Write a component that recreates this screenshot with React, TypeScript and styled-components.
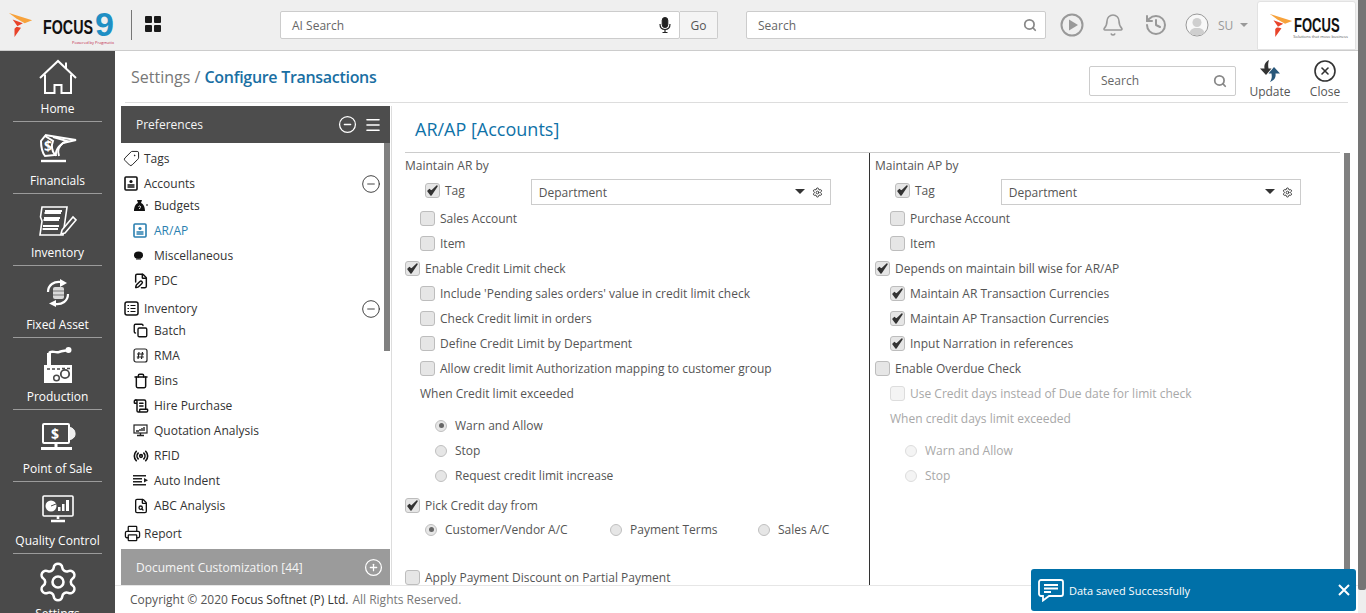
import React from 'react';
import styled, { createGlobalStyle } from 'styled-components';
import {
  Bell,
  CircleMinus,
  CirclePlus,
  CircleX,
  Copy,
  FilePen,
  FileSearch,
  History,
  Menu,
  Printer,
  Radio as RadioWaves,
  ScrollText,
  Search,
  Settings,
  Tag,
  Trash,
} from 'lucide-react';

const GlobalStyle = createGlobalStyle`
  html, body { margin: 0; padding: 0; height: 100%; overflow: hidden; }
  body { font-family: "Open Sans", "Liberation Sans", sans-serif; font-size: 12px; color: #444; background: #fff; }
  #root { height: 100%; }
  * { box-sizing: border-box; }
`;

const Shell = styled.div`
  display: flex;
  height: 100vh;
  overflow: hidden;
  position: relative;
`;

const Page = styled.div`
  flex: 1;
  min-width: 0;
  display: flex;
  flex-direction: column;
`;

const Rail = styled.div`
  width: 8px;
  background: #eee;
  display: flex;
  flex-direction: column;
`;

const RailThumb = styled.div`
  height: 590px;
  background: #757575;
  border-radius: 0 0 2px 2px;
`;

// top bar
const TopBar = styled.header`
  height: 51px;
  flex: none;
  display: flex;
  align-items: center;
  padding-left: 8px;
  background: #efefef;
  border-bottom: 1px solid #ccc;
`;

const LogoWrap = styled.div`
  width: 106px;
  height: 34px;
  display: flex;
  align-items: center;
  position: relative;
`;

const LogoText = styled.span`
  font-family: "Liberation Sans", sans-serif;
  font-weight: 700;
  font-size: 21px;
  line-height: 22px;
  color: #111;
  margin-left: 9px;
  transform: scaleX(0.68);
  transform-origin: left center;
  width: 50px;
  flex: none;
  margin-top: 3px;
`;

const LogoNine = styled.span`
  font-family: "Liberation Sans", sans-serif;
  font-weight: 700;
  font-size: 34px;
  color: #1f8fc4;
  margin-left: 2px;
  line-height: 26px;
  height: 26px;
  margin-top: -2px;
`;

const LogoTiny = styled.span`
  position: absolute;
  right: 0;
  bottom: -3px;
  font-size: 4px;
  line-height: 5px;
  color: #c2284a;
`;

const BarDivider = styled.div`
  width: 1px;
  height: 30px;
  background: #777;
  margin-left: 17px;
`;

const GridIcon = styled.div`
  width: 16px;
  height: 16px;
  margin: -2px 0 0 13px;
  display: grid;
  grid-template-columns: 7px 7px;
  grid-template-rows: 7px 7px;
  gap: 2px;
`;

const GridCell = styled.span`
  background: #1a1a1a;
  border-radius: 1px;
`;

const SearchBox = styled.div<{ $w: number; $ml: number }>`
  width: ${(p) => p.$w}px;
  height: 28px;
  margin-left: ${(p) => p.$ml}px;
  flex: none;
  display: flex;
  align-items: center;
  justify-content: space-between;
  padding: 0 8px 0 11px;
  background: #fff;
  border: 1px solid #ccc;
  border-radius: 2px;
  color: #666;
  font-size: 12px;
`;

const GoButton = styled.button`
  width: 38px;
  height: 28px;
  flex: none;
  background: #f4f4f4;
  border: 1px solid #ccc;
  border-left: 0;
  border-radius: 0 2px 2px 0;
  font: inherit;
  font-size: 12px;
  color: #555;
  padding: 0;
`;

const BarIcon = styled.div<{ $ml: number }>`
  width: 24px;
  height: 24px;
  margin-left: ${(p) => p.$ml}px;
  flex: none;
  display: flex;
  align-items: center;
  justify-content: center;
  color: #999;
`;

const UserName = styled.span`
  color: #999;
  font-size: 12px;
  margin-left: 9px;
`;

const Caret = styled.span`
  width: 0;
  height: 0;
  margin-left: 7px;
  border-left: 4px solid transparent;
  border-right: 4px solid transparent;
  border-top: 4px solid #999;
`;

const BrandBox = styled.div`
  width: 99px;
  height: 49px;
  margin-left: 9px;
  align-self: flex-start;
  margin-top: 1px;
  background: #fff;
  border: 1px solid #e2e2e2;
  border-radius: 3px 3px 0 0;
  display: flex;
  align-items: center;
  padding-left: 11px;
  gap: 0;
  flex: none;
`;

const BrandStack = styled.div`
  display: flex;
  flex-direction: column;
  width: 48px;
  margin-top: 2px;
`;

const BrandText = styled.span`
  font-family: "Liberation Sans", sans-serif;
  font-weight: 700;
  font-size: 21px;
  line-height: 19px;
  color: #111;
  transform: scaleX(0.62);
  transform-origin: left center;
`;

const BrandTag = styled.span`
  font-size: 4px;
  line-height: 5px;
  white-space: nowrap;
  color: #555;
  margin-left: -1px;
`;

// page body
const Body = styled.div`
  flex: 1;
  min-height: 0;
  display: flex;
`;

const SideNav = styled.nav`
  width: 115px;
  flex: none;
  background: #4a4a4a;
  overflow: hidden;
`;

const SideItem = styled.div`
  position: relative;
  height: 72px;
  flex: none;
  display: flex;
  flex-direction: column;
  align-items: center;
  justify-content: flex-end;
  padding-bottom: 3px;
  color: #fff;
  font-size: 12px;
  line-height: 18px;
  margin: 0 13px;
  border-bottom: 1px solid #9b9b9b;
  white-space: nowrap;

  &:first-child { height: 71px; }
  &:last-child {
    border-bottom: 0;
    height: 68px;
    padding: 9px 0 0;
    justify-content: flex-start;
  }
`;

const SideIcon = styled.div`
  height: 38px;
  flex: none;
  display: flex;
  align-items: center;
  justify-content: center;
  margin-bottom: 4px;
`;

const Main = styled.main`
  flex: 1;
  min-width: 0;
  display: flex;
  flex-direction: column;
`;

const MainHead = styled.div`
  height: 52px;
  flex: none;
  margin: 0 10px;
  padding: 0 3px 0 6px;
  display: flex;
  align-items: center;
  border-bottom: 1px solid #ddd;
`;

const Crumb = styled.div`
  font-size: 16px;
  color: #777;
  margin-right: auto;
  margin-top: 1px;
`;

const CrumbStrong = styled.span`
  color: #1a6fa3;
  font-weight: 600;
  letter-spacing: -0.3px;
`;

const HeadSearch = styled(SearchBox)`
  height: 30px;
  margin-top: 8px;
`;

const HeadAction = styled.div<{ $w: number; $ml: number }>`
  width: ${(p) => p.$w}px;
  margin-left: ${(p) => p.$ml}px;
  display: flex;
  flex-direction: column;
  align-items: center;
  gap: 1px;
  color: #555;
  font-size: 12px;
  line-height: 16px;
  padding-top: 6px;
`;

const HeadActionIcon = styled.div`
  height: 24px;
  display: flex;
  align-items: center;
  justify-content: center;
  color: #333;
`;

const Split = styled.div`
  flex: 1;
  min-height: 0;
  display: flex;
  padding-left: 6px;
`;

// preferences panel
const Panel = styled.aside`
  width: 271px;
  flex: none;
  margin-top: 3px;
  display: flex;
  flex-direction: column;
  border-right: 1px solid #ddd;
`;

const PanelHead = styled.div<{ $muted?: boolean }>`
  height: ${(p) => (p.$muted ? 36 : 37)}px;
  flex: none;
  margin-right: 1px;
  display: flex;
  align-items: center;
  padding: 0 ${(p) => (p.$muted ? 7 : 8)}px 0 15px;
  background: ${(p) => (p.$muted ? '#9b9b9b' : '#4d4d4d')};
  color: #fff;
  font-size: 12px;
  gap: 7px;
`;

const PanelTitle = styled.span`
  margin-right: auto;
  color: #f5f5f5;
`;

const TreeWrap = styled.div`
  flex: 1;
  min-height: 0;
  display: flex;
  margin-right: 1px;
`;

const Tree = styled.div`
  flex: 1;
  overflow: hidden;
`;

const TreeThumbTrack = styled.div`
  width: 6px;
  flex: none;
`;

const TreeThumb = styled.div`
  height: 208px;
  background: #808080;
`;

const ParentRow = styled.div`
  height: 19px;
  margin-top: 6px;
  padding: 0 3px 0 3px;
  display: flex;
  align-items: center;
  color: #333;
  white-space: nowrap;
`;

const ChildRow = styled.div<{ $active?: boolean }>`
  height: 25px;
  padding-left: 12px;
  display: flex;
  align-items: center;
  color: ${(p) => (p.$active ? '#2a7fb0' : '#333')};
  white-space: nowrap;
`;

const TreeIcon = styled.span<{ $w: number }>`
  width: ${(p) => p.$w}px;
  flex: none;
  display: flex;
  align-items: center;
`;

const TreeToggle = styled.span`
  margin-left: auto;
  display: flex;
  color: #333;
`;

const TagGlyph = styled(Tag)`
  transform: rotate(90deg);
  margin-left: -1px;
`;

// form
const Content = styled.section`
  flex: 1;
  min-width: 0;
  display: flex;
  flex-direction: column;
`;

const ContentTitle = styled.h2`
  height: 49px;
  flex: none;
  margin: 0;
  padding: 14px 0 0 23px;
  font-size: 18px;
  line-height: 24px;
  font-weight: 400;
  color: #0f72a8;
`;

const FormArea = styled.div`
  flex: 1;
  min-height: 0;
  display: flex;
`;

const FormGrid = styled.div`
  width: 935px;
  margin-left: 13px;
  display: grid;
  grid-template-columns: 464px 1fr;
  border-top: 1px solid #ccc;
  overflow: hidden;
`;

const FormColumn = styled.div<{ $right?: boolean }>`
  min-height: 0;
  overflow: hidden;
  ${(p) => (p.$right ? 'border-left: 1px solid #333; padding-left: 5px;' : '')}
`;

const FormThumb = styled.div`
  width: 6px;
  margin-left: 4px;
  margin-top: 1px;
  background: #808080;
  flex: none;
`;

const Row = styled.div<{ $indent?: number; $mt?: number; $off?: boolean; $h?: number }>`
  height: ${(p) => p.$h ?? 25}px;
  margin-top: ${(p) => p.$mt ?? 0}px;
  padding-left: ${(p) => p.$indent ?? 0}px;
  display: flex;
  align-items: center;
  white-space: nowrap;
  color: ${(p) => (p.$off ? '#a8a8a8' : '#555')};
`;

const TagRow = styled(Row)`
  align-items: flex-start;
  height: 28px;
  padding-top: 0;
`;

const CheckField = styled.span`
  height: 25px;
  display: inline-flex;
  align-items: center;
  gap: 5px;
`;

const Box = styled.span<{ $off?: boolean }>`
  width: 15px;
  height: 15px;
  flex: none;
  border: 1px solid ${(p) => (p.$off ? '#ddd' : '#bdbdbd')};
  border-radius: 3px;
  background: ${(p) => (p.$off ? '#f4f4f4' : '#e6e6e6')};
  display: flex;
  align-items: center;
  justify-content: center;
`;

const Dot = styled.span<{ $on?: boolean; $off?: boolean }>`
  width: 12px;
  height: 12px;
  flex: none;
  border-radius: 50%;
  border: 1px solid ${(p) => (p.$off ? '#ddd' : '#c0c0c0')};
  background: ${(p) => (p.$off ? '#f4f4f4' : '#e6e6e6')};
  margin-right: 8px;
  display: flex;
  align-items: center;
  justify-content: center;

  &::after {
    content: '';
    width: 5px;
    height: 5px;
    border-radius: 50%;
    background: ${(p) => (p.$on ? '#666' : 'transparent')};
  }
`;

const RadioOption = styled.span<{ $w: number }>`
  width: ${(p) => p.$w}px;
  display: inline-flex;
  align-items: center;
`;

const SelectBox = styled.div<{ $ml: number }>`
  width: 300px;
  height: 26px;
  margin: 1px 0 0 ${(p) => p.$ml}px;
  padding: 1px 7px 0 7px;
  display: flex;
  align-items: center;
  border: 1px solid #ccc;
  color: #555;
`;

const SelectCaret = styled.span`
  width: 0;
  height: 0;
  margin: -2px 7px 0 auto;
  border-left: 5px solid transparent;
  border-right: 5px solid transparent;
  border-top: 5px solid #333;
`;

const Footer = styled.footer`
  height: 28px;
  flex: none;
  padding-left: 15px;
  display: flex;
  align-items: center;
  gap: 4px;
  border-top: 1px solid #e6e6e6;
  color: #777;
  font-size: 12px;
`;

const FooterCopy = styled.span`
  color: #555;
`;

const FooterStrong = styled.span`
  color: #333;
  font-weight: 500;
`;

const Toast = styled.div`
  position: absolute;
  right: 10px;
  bottom: 2px;
  width: 325px;
  height: 42px;
  padding: 0 6px 0 7px;
  display: flex;
  align-items: center;
  gap: 5px;
  background: #0070a8;
  border-radius: 3px;
  color: #fff;
  font-size: 11px;
`;

const ToastClose = styled.span`
  margin-left: auto;
  display: flex;
`;

// drawings
const Flame = ({ size }: { size: number }) => (
  <svg width={size} height={size} viewBox="0 0 26 28">
    <polygon points="0,1 25,9 17,12 8,7" fill="#f7a23b" />
    <polygon points="4,8 15,12 8,16 13,17 6,27 6,18 9,15" fill="#e8432a" />
  </svg>
);

const CheckMark = () => (
  <svg width="13" height="13" viewBox="0 0 13 13">
    <path d="M2 7 L5 11 L11 2 L5.2 7.6 L3.6 5.6 Z" fill="#333" stroke="#333" strokeWidth="1.5" strokeLinejoin="round" />
  </svg>
);

const Check = ({ on, off }: { on?: boolean; off?: boolean }) => <Box $off={off}>{on && <CheckMark />}</Box>;

const MicIcon = () => (
  <svg width="12" height="16" viewBox="0 0 12 16" fill="none" stroke="#222">
    <rect x="3.2" y="0.5" width="5.6" height="10" rx="2.8" fill="#222" />
    <path d="M1 7 C1 11 3 12.5 6 12.5 C9 12.5 11 11 11 7 M6 12.5 V15.5 M3.5 15.5 H8.5" strokeWidth="1.2" />
  </svg>
);

const PlayIcon = () => (
  <svg width="24" height="24" viewBox="0 0 24 24">
    <circle cx="12" cy="12" r="10.5" fill="none" stroke="#999" strokeWidth="2" />
    <polygon points="9,6.5 18,12 9,17.5" fill="#999" />
  </svg>
);

const AvatarIcon = () => (
  <svg width="24" height="24" viewBox="0 0 24 24">
    <circle cx="12" cy="12" r="11" fill="#f8f8f8" stroke="#999" strokeWidth="1" />
    <circle cx="12" cy="9.5" r="4.5" fill="#cfcfcf" />
    <path d="M4.5 20 C6 15 9 15 12 15 C15 15 18 15 19.5 20 C16 23 8 23 4.5 20 Z" fill="#cfcfcf" />
  </svg>
);

const MiniSearch = ({ color }: { color: string }) => <Search size={14} color={color} strokeWidth={3} />;

const UpdateIcon = () => (
  <svg width="24" height="24" viewBox="0 0 24 24" fill="#333">
    <path d="M11 1 C7 3 6 6 6.5 9.5 L2 9.5 L8 16 L13.5 9.5 L10.5 9.5 C10 6.5 10 4 11 1 Z" />
    <path d="M12 23 C17 21 18 18 17.5 14.5 L22 14.5 L16 8 L10.5 14.5 L13.5 14.5 C14 17.5 14 20 12 23 Z" fill="#28577a" />
  </svg>
);

const HomeIcon = () => (
  <svg width="38" height="36" viewBox="0 0 38 36" fill="none" stroke="#fff" strokeWidth="2">
    <path d="M1 19 L19 2 L37 19" />
    <path d="M27 10 V3.5" />
    <path d="M6 15.5 V34 H15.5 V26 H22.5 V34 H32 V15.5" />
  </svg>
);

const FinancialsIcon = () => (
  <svg width="38" height="30" viewBox="0 0 38 30" fill="none" stroke="#fff" strokeWidth="2">
    <path d="M2 7 C2 13 3 18 6 22 L16 21 C13 17 12 12 14 7 L6 2 Z" />
    <path d="M6 1 L37 6 L24 9 C20 12 18 17 20 22" />
    <path d="M14 3 L28 7 C22 9 16 15 17 22" />
    <path d="M2 27 H27" strokeWidth="2.4" />
    <text x="5" y="17" fontSize="14" fontWeight="700" fill="#fff" stroke="none" fontFamily="Open Sans">$</text>
  </svg>
);

const InventoryIcon = () => (
  <svg width="38" height="32" viewBox="0 0 38 32" fill="none" stroke="#fff" strokeWidth="1.6">
    <path d="M3 2 H28 L24 30 H1 L3 16 L1.5 12 Z" />
    <path d="M6 6 H23 M5.5 8 H22 M5 13 H21 M4.5 15 H20 M4 21 H20 M3.6 24 H19" strokeWidth="2" />
    <path d="M23 25 L34 12 L37 15 L26 28 L22 29 Z" fill="#4a4a4a" />
  </svg>
);

const FixedAssetIcon = () => (
  <svg width="24" height="28" viewBox="0 0 24 28" fill="none" stroke="#fff" strokeWidth="2.2">
    <path d="M2 13 C2 6 8 2 15 3" />
    <polygon points="14,0 21,4 14,8" fill="#fff" stroke="none" />
    <path d="M22 15 C22 22 16 26 9 25" />
    <polygon points="10,21 3,24.5 10,28" fill="#fff" stroke="none" />
    <rect x="7" y="8" width="11" height="12" rx="2" fill="#d8d8d8" stroke="none" />
    <path d="M7 12 H18 M7 16 H18" stroke="#777" strokeWidth="1" />
  </svg>
);

const ProductionIcon = () => (
  <svg width="30" height="36" viewBox="0 0 30 36" fill="none">
    <path d="M1 36 V18 H4 V6 H8 V18 H29 V36 Z" fill="#fff" />
    <path d="M6 6 C8 3 12 6 16 5 C19 4 20 4 23 3.5" stroke="#fff" strokeWidth="2.4" />
    <circle cx="25.5" cy="3" r="3" fill="#fff" />
    <circle cx="22" cy="27" r="4.2" stroke="#4a4a4a" strokeWidth="1.8" />
    <circle cx="13.5" cy="31" r="2.8" stroke="#4a4a4a" strokeWidth="1.5" />
    <path d="M4 22 H7 M9 22 H12 M14 22 H17 M19 21.5 H22 M24 21.5 H27" stroke="#4a4a4a" strokeWidth="1.4" />
  </svg>
);

const PosIcon = () => (
  <svg width="36" height="28" viewBox="0 0 36 28" fill="none" stroke="#fff" strokeWidth="2">
    <rect x="3" y="1" width="26" height="19" rx="1" />
    <path d="M29 4 C33 5 35 7 35 11 C35 14 33 16 29 17 Z" fill="#eee" strokeWidth="1" />
    <path d="M16 20 V24 M1 25.5 H32" strokeWidth="3" />
    <text x="11" y="16" fontSize="14" fontWeight="700" fill="#fff" stroke="none" fontFamily="Open Sans">$</text>
  </svg>
);

const QualityIcon = () => (
  <svg width="32" height="28" viewBox="0 0 32 28" fill="none">
    <rect x="1" y="1" width="30" height="20" rx="1" stroke="#fff" strokeWidth="1.6" />
    <circle cx="9" cy="11" r="5.5" fill="#fff" />
    <path d="M9 11 L14 9" stroke="#4a4a4a" />
    <path d="M16 16 V12 H18.5 V16 Z M20 16 V9 H22.5 V16 Z M24 16 V5 H27 V16 Z" fill="#fff" />
    <path d="M16 21 V24 M9 26 H23" stroke="#fff" strokeWidth="2.6" />
  </svg>
);

const IdCardIcon = ({ color }: { color: string }) => (
  <svg width="15" height="15" viewBox="0 0 15 15" fill="none" stroke={color}>
    <rect x="1" y="1" width="12" height="13" rx="1" strokeWidth="1.6" />
    <circle cx="7" cy="5.5" r="1.6" fill={color} stroke="none" />
    <path d="M3.5 9 H10.5 M3.5 11 H10.5" strokeWidth="1.3" />
  </svg>
);

const ListBoxIcon = () => (
  <svg width="15" height="15" viewBox="0 0 15 15" fill="none" stroke="#111">
    <rect x="1" y="1" width="13" height="13" rx="2" strokeWidth="1.5" />
    <path d="M3.5 4.5 H5 M6.5 4.5 H11.5 M3.5 7.5 H5 M6.5 7.5 H11.5 M3.5 10.5 H5 M6.5 10.5 H11.5" strokeWidth="1.2" />
  </svg>
);

const MoneyBagIcon = () => (
  <svg width="15" height="14" viewBox="0 0 15 14" fill="#111">
    <path d="M4 1 H9 L8 4 C11 5 12 9 12 12 H1 C1 9 2 5 5 4 Z" />
    <path d="M13 6 H15" stroke="#111" />
    <path d="M5.5 7.5 C6.5 6.5 8 7 7.5 8.3 L6.7 9 V10" stroke="#fff" fill="none" />
  </svg>
);

const BlobIcon = () => (
  <svg width="11" height="9" viewBox="0 0 11 9" fill="#111">
    <ellipse cx="5.5" cy="4.2" rx="4.5" ry="3.6" />
    <path d="M3 8 H8" stroke="#111" />
  </svg>
);

const HashBoxIcon = () => (
  <svg width="15" height="15" viewBox="0 0 15 15" fill="none" stroke="#222">
    <rect x="1" y="1" width="13" height="13" rx="2" strokeWidth="1.2" />
    <path d="M6 4 L5 11 M9.5 4 L8.5 11 M4 6 H11 M3.8 9 H10.8" strokeWidth="1.2" />
  </svg>
);

const ScreenIcon = () => (
  <svg width="15" height="13" viewBox="0 0 15 13" fill="none" stroke="#222">
    <rect x="1" y="1" width="13" height="8" strokeWidth="1.2" />
    <path d="M3 7 H6 M7 7 V5 M9 7 V4 M11 7 V3" strokeWidth="1.4" />
    <path d="M4 11.5 H11 M7.5 9 V11" strokeWidth="1.4" />
  </svg>
);

const IndentIcon = () => (
  <svg width="15" height="11" viewBox="0 0 15 11" fill="#222">
    <rect x="0" y="0" width="13" height="1.5" />
    <rect x="0" y="3" width="9" height="1.5" />
    <rect x="0" y="6" width="9" height="1.5" />
    <rect x="0" y="9" width="13" height="1.5" />
    <polygon points="11,3 15,5.2 11,7.5" />
  </svg>
);

const ToastIcon = () => (
  <svg width="26" height="23" viewBox="0 0 26 23" fill="none" stroke="#fff" strokeWidth="1.8">
    <path d="M3 1 H23 C24 1 25 2 25 3 V15 C25 16 24 17 23 17 H11 L5 21.5 V17 H3 C2 17 1 16 1 15 V3 C1 2 2 1 3 1 Z" />
    <path d="M6 6 H20 M6 9.5 H20 M6 13 H13" strokeWidth="2" />
  </svg>
);

const X = () => (
  <svg width="12" height="12" viewBox="0 0 12 12" stroke="#fff" strokeWidth="2">
    <path d="M1 1 L11 11 M11 1 L1 11" />
  </svg>
);

const sideItems: [string, React.ReactNode][] = [
  ['Home', <HomeIcon />],
  ['Financials', <FinancialsIcon />],
  ['Inventory', <InventoryIcon />],
  ['Fixed Asset', <FixedAssetIcon />],
  ['Production', <ProductionIcon />],
  ['Point of Sale', <PosIcon />],
  ['Quality Control', <QualityIcon />],
  ['Settings', <Settings size={44} color="#fff" strokeWidth={1.4} />],
];

const inventoryChildren: [string, React.ReactNode][] = [
  ['Batch', <Copy size={15} color="#111" strokeWidth={2.2} />],
  ['RMA', <HashBoxIcon />],
  ['Bins', <Trash size={16} color="#111" strokeWidth={2.2} />],
  ['Hire Purchase', <ScrollText size={16} color="#111" strokeWidth={2.2} />],
  ['Quotation Analysis', <ScreenIcon />],
  ['RFID', <RadioWaves size={16} color="#111" strokeWidth={2.4} />],
  ['Auto Indent', <IndentIcon />],
  ['ABC Analysis', <FileSearch size={16} color="#111" strokeWidth={2} />],
];

const App = () => (
  <>
    <GlobalStyle />
    <Shell>
      <Page>
        <TopBar>
          <LogoWrap>
            <Flame size={26} />
            <LogoText>FOCUS</LogoText>
            <LogoNine>9</LogoNine>
            <LogoTiny>Powered by Pragmatix</LogoTiny>
          </LogoWrap>
          <BarDivider />
          <GridIcon>
            <GridCell />
            <GridCell />
            <GridCell />
            <GridCell />
          </GridIcon>
          <SearchBox $w={400} $ml={119}>
            AI Search
            <MicIcon />
          </SearchBox>
          <GoButton>Go</GoButton>
          <SearchBox $w={300} $ml={28}>
            Search
            <MiniSearch color="#888" />
          </SearchBox>
          <BarIcon $ml={14}>
            <PlayIcon />
          </BarIcon>
          <BarIcon $ml={17}>
            <Bell size={26} strokeWidth={1.6} />
          </BarIcon>
          <BarIcon $ml={19}>
            <History size={26} strokeWidth={2} />
          </BarIcon>
          <BarIcon $ml={17}>
            <AvatarIcon />
          </BarIcon>
          <UserName>SU</UserName>
          <Caret />
          <BrandBox>
            <Flame size={25} />
            <BrandStack>
              <BrandText>FOCUS</BrandText>
              <BrandTag>Solutions that move business</BrandTag>
            </BrandStack>
          </BrandBox>
        </TopBar>
        <Body>
          <SideNav>
            {sideItems.map(([label, icon]) => (
              <SideItem key={label}>
                <SideIcon>{icon}</SideIcon>
                {label}
              </SideItem>
            ))}
          </SideNav>
          <Main>
            <MainHead>
              <Crumb>
                Settings / <CrumbStrong>Configure Transactions</CrumbStrong>
              </Crumb>
              <HeadSearch $w={147} $ml={0}>
                Search
                <MiniSearch color="#888" />
              </HeadSearch>
              <HeadAction $w={50} $ml={9}>
                <HeadActionIcon>
                  <UpdateIcon />
                </HeadActionIcon>
                Update
              </HeadAction>
              <HeadAction $w={40} $ml={10}>
                <HeadActionIcon>
                  <CircleX size={24} strokeWidth={1.6} />
                </HeadActionIcon>
                Close
              </HeadAction>
            </MainHead>
            <Split>
              <Panel>
                <PanelHead>
                  <PanelTitle>Preferences</PanelTitle>
                  <CircleMinus size={19} color="#fff" strokeWidth={1.6} />
                  <Menu size={18} color="#fff" strokeWidth={2.2} />
                </PanelHead>
                <TreeWrap>
                  <Tree>
                    <ParentRow>
                      <TreeIcon $w={20}>
                        <TagGlyph size={17} color="#222" strokeWidth={1.4} />
                      </TreeIcon>
                      Tags
                    </ParentRow>
                    <ParentRow>
                      <TreeIcon $w={20}>
                        <IdCardIcon color="#111" />
                      </TreeIcon>
                      Accounts
                      <TreeToggle>
                        <CircleMinus size={20} strokeWidth={1.1} />
                      </TreeToggle>
                    </ParentRow>
                    <ChildRow>
                      <TreeIcon $w={21}>
                        <MoneyBagIcon />
                      </TreeIcon>
                      Budgets
                    </ChildRow>
                    <ChildRow $active>
                      <TreeIcon $w={21}>
                        <IdCardIcon color="#2a7fb0" />
                      </TreeIcon>
                      AR/AP
                    </ChildRow>
                    <ChildRow>
                      <TreeIcon $w={21}>
                        <BlobIcon />
                      </TreeIcon>
                      Miscellaneous
                    </ChildRow>
                    <ChildRow>
                      <TreeIcon $w={21}>
                        <FilePen size={16} color="#111" strokeWidth={2.2} />
                      </TreeIcon>
                      PDC
                    </ChildRow>
                    <ParentRow>
                      <TreeIcon $w={20}>
                        <ListBoxIcon />
                      </TreeIcon>
                      Inventory
                      <TreeToggle>
                        <CircleMinus size={20} strokeWidth={1.1} />
                      </TreeToggle>
                    </ParentRow>
                    {inventoryChildren.map(([label, icon]) => (
                      <ChildRow key={label}>
                        <TreeIcon $w={21}>{icon}</TreeIcon>
                        {label}
                      </ChildRow>
                    ))}
                    <ParentRow>
                      <TreeIcon $w={20}>
                        <Printer size={17} color="#111" strokeWidth={1.8} />
                      </TreeIcon>
                      Report
                    </ParentRow>
                  </Tree>
                  <TreeThumbTrack>
                    <TreeThumb />
                  </TreeThumbTrack>
                </TreeWrap>
                <PanelHead $muted>
                  <PanelTitle>Document Customization [44]</PanelTitle>
                  <CirclePlus size={19} color="#fff" strokeWidth={1.6} />
                </PanelHead>
              </Panel>
              <Content>
                <ContentTitle>AR/AP [Accounts]</ContentTitle>
                <FormArea>
                  <FormGrid>
                    <FormColumn>
                      <Row>Maintain AR by</Row>
                      <TagRow $indent={20}>
                        <CheckField>
                          <Check on />
                          Tag
                        </CheckField>
                        <SelectBox $ml={66}>
                          Department
                          <SelectCaret />
                          <Settings size={11} color="#333" />
                        </SelectBox>
                      </TagRow>
                      <Row $indent={15}>
                        <CheckField>
                          <Check />
                          Sales Account
                        </CheckField>
                      </Row>
                      <Row $indent={15}>
                        <CheckField>
                          <Check />
                          Item
                        </CheckField>
                      </Row>
                      <Row>
                        <CheckField>
                          <Check on />
                          Enable Credit Limit check
                        </CheckField>
                      </Row>
                      <Row $indent={15}>
                        <CheckField>
                          <Check />
                          Include 'Pending sales orders' value in credit limit check
                        </CheckField>
                      </Row>
                      <Row $indent={15}>
                        <CheckField>
                          <Check />
                          Check Credit limit in orders
                        </CheckField>
                      </Row>
                      <Row $indent={15}>
                        <CheckField>
                          <Check />
                          Define Credit Limit by Department
                        </CheckField>
                      </Row>
                      <Row $indent={15}>
                        <CheckField>
                          <Check />
                          Allow credit limit Authorization mapping to customer group
                        </CheckField>
                      </Row>
                      <Row $indent={15}>When Credit limit exceeded</Row>
                      <Row $indent={30} $mt={7}>
                        <Dot $on />
                        Warn and Allow
                      </Row>
                      <Row $indent={30}>
                        <Dot />
                        Stop
                      </Row>
                      <Row $indent={30}>
                        <Dot />
                        Request credit limit increase
                      </Row>
                      <Row $mt={5}>
                        <CheckField>
                          <Check on />
                          Pick Credit day from
                        </CheckField>
                      </Row>
                      <Row $indent={20} $mt={-1}>
                        <RadioOption $w={185}>
                          <Dot $on />
                          Customer/Vendor A/C
                        </RadioOption>
                        <RadioOption $w={148}>
                          <Dot />
                          Payment Terms
                        </RadioOption>
                        <RadioOption $w={90}>
                          <Dot />
                          Sales A/C
                        </RadioOption>
                      </Row>
                      <Row $mt={23}>
                        <CheckField>
                          <Check />
                          Apply Payment Discount on Partial Payment
                        </CheckField>
                      </Row>
                    </FormColumn>
                    <FormColumn $right>
                      <Row>Maintain AP by</Row>
                      <TagRow $indent={20}>
                        <CheckField>
                          <Check on />
                          Tag
                        </CheckField>
                        <SelectBox $ml={66}>
                          Department
                          <SelectCaret />
                          <Settings size={11} color="#333" />
                        </SelectBox>
                      </TagRow>
                      <Row $indent={15}>
                        <CheckField>
                          <Check />
                          Purchase Account
                        </CheckField>
                      </Row>
                      <Row $indent={15}>
                        <CheckField>
                          <Check />
                          Item
                        </CheckField>
                      </Row>
                      <Row>
                        <CheckField>
                          <Check on />
                          Depends on maintain bill wise for AR/AP
                        </CheckField>
                      </Row>
                      <Row $indent={15}>
                        <CheckField>
                          <Check on />
                          Maintain AR Transaction Currencies
                        </CheckField>
                      </Row>
                      <Row $indent={15}>
                        <CheckField>
                          <Check on />
                          Maintain AP Transaction Currencies
                        </CheckField>
                      </Row>
                      <Row $indent={15}>
                        <CheckField>
                          <Check on />
                          Input Narration in references
                        </CheckField>
                      </Row>
                      <Row>
                        <CheckField>
                          <Check />
                          Enable Overdue Check
                        </CheckField>
                      </Row>
                      <Row $indent={15} $off>
                        <CheckField>
                          <Check off />
                          Use Credit days instead of Due date for limit check
                        </CheckField>
                      </Row>
                      <Row $indent={15} $off>
                        When credit days limit exceeded
                      </Row>
                      <Row $indent={30} $mt={7} $off>
                        <Dot $off />
                        Warn and Allow
                      </Row>
                      <Row $indent={30} $off>
                        <Dot $off />
                        Stop
                      </Row>
                    </FormColumn>
                  </FormGrid>
                  <FormThumb />
                </FormArea>
              </Content>
            </Split>
            <Footer>
              <span>
                <FooterCopy>Copyright © 2020 </FooterCopy>
                <FooterStrong>Focus Softnet (P) Ltd.</FooterStrong>
              </span>
              All Rights Reserved.
            </Footer>
          </Main>
        </Body>
      </Page>
      <Rail>
        <RailThumb />
      </Rail>
      <Toast>
        <ToastIcon />
        Data saved Successfully
        <ToastClose>
          <X />
        </ToastClose>
      </Toast>
    </Shell>
  </>
);

export default App;
